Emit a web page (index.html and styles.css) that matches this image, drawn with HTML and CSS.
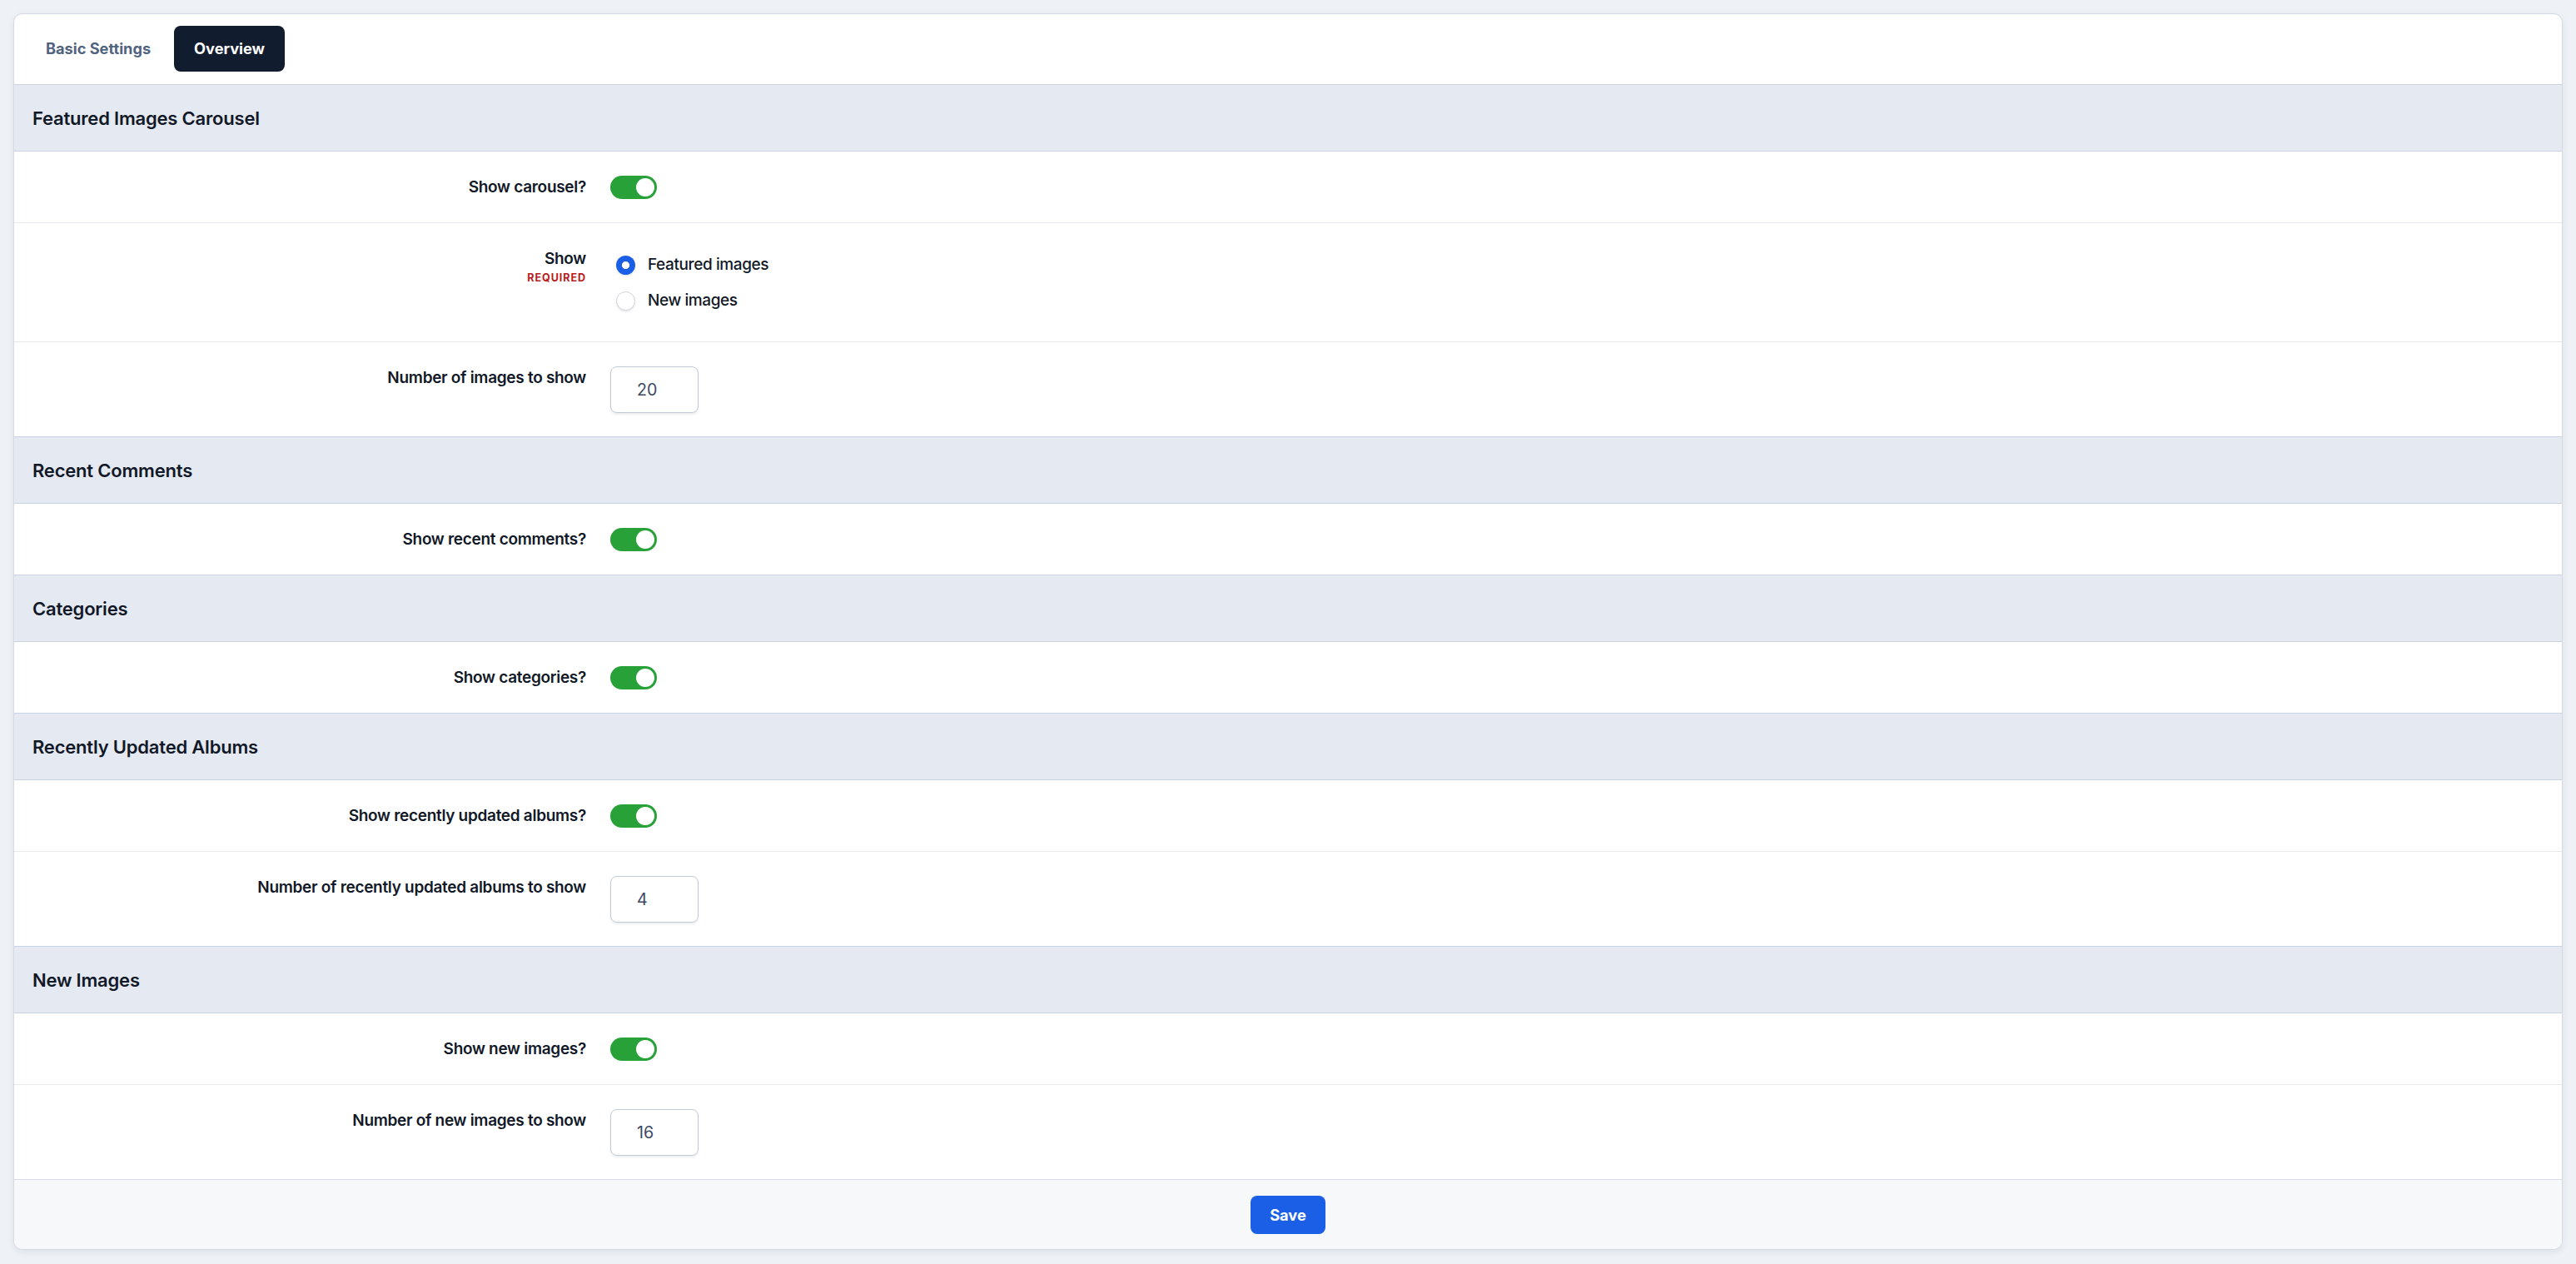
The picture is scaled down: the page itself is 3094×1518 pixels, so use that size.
FILE: index.html
```html
<!DOCTYPE html>
<html lang="en">
<head>
<meta charset="utf-8">
<title>Overview settings</title>
<link rel="stylesheet" href="styles.css">
</head>
<body>
<div class="card">
  <nav class="tabs">
    <button class="tab">Basic Settings</button>
    <button class="tab tab-active">Overview</button>
  </nav>

  <section class="group">
    <h2 class="group-head">Featured Images Carousel</h2>
    <div class="row">
      <div class="row-label"><span class="label-text">Show carousel?</span></div>
      <div class="row-control"><span class="toggle"><span class="knob"></span></span></div>
    </div>
    <div class="row">
      <div class="row-label"><span class="label-text">Show</span><span class="required">REQUIRED</span></div>
      <div class="row-control">
        <div class="radios">
          <div class="radio-opt"><span class="radio radio-on"></span><span class="radio-text">Featured images</span></div>
          <div class="radio-opt"><span class="radio"></span><span class="radio-text">New images</span></div>
        </div>
      </div>
    </div>
    <div class="row">
      <div class="row-label"><span class="label-text">Number of images to show</span></div>
      <div class="row-control"><span class="num-input">20</span></div>
    </div>
  </section>

  <section class="group">
    <h2 class="group-head">Recent Comments</h2>
    <div class="row">
      <div class="row-label"><span class="label-text">Show recent comments?</span></div>
      <div class="row-control"><span class="toggle"><span class="knob"></span></span></div>
    </div>
  </section>

  <section class="group">
    <h2 class="group-head">Categories</h2>
    <div class="row">
      <div class="row-label"><span class="label-text">Show categories?</span></div>
      <div class="row-control"><span class="toggle"><span class="knob"></span></span></div>
    </div>
  </section>

  <section class="group">
    <h2 class="group-head">Recently Updated Albums</h2>
    <div class="row">
      <div class="row-label"><span class="label-text">Show recently updated albums?</span></div>
      <div class="row-control"><span class="toggle"><span class="knob"></span></span></div>
    </div>
    <div class="row">
      <div class="row-label"><span class="label-text">Number of recently updated albums to show</span></div>
      <div class="row-control"><span class="num-input">4</span></div>
    </div>
  </section>

  <section class="group">
    <h2 class="group-head">New Images</h2>
    <div class="row">
      <div class="row-label"><span class="label-text">Show new images?</span></div>
      <div class="row-control"><span class="toggle"><span class="knob"></span></span></div>
    </div>
    <div class="row">
      <div class="row-label"><span class="label-text">Number of new images to show</span></div>
      <div class="row-control"><span class="num-input">16</span></div>
    </div>
  </section>

  <footer class="footer">
    <button class="save">Save</button>
  </footer>
</div>
</body>
</html>
```

FILE: styles.css
```css
* { box-sizing: border-box; }

html, body { height: 100%; }

body {
  margin: 0;
  padding: 16px;
  background: #eef1f6;
  font-family: Inter, "Liberation Sans", sans-serif;
  color: #111827;
}

.card {
  background: #ffffff;
  border: 1px solid #d4d9e3;
  border-radius: 11px;
  overflow: hidden;
  box-shadow: 0 3px 8px rgba(30, 41, 59, 0.07);
}

.tabs {
  display: flex;
  gap: 4px;
  padding: 14px 14px 15px;
  border-bottom: 1px solid #cdd5e1;
}

.tab {
  font-family: inherit;
  font-size: 18.2px;
  font-weight: 700;
  line-height: 55px;
  height: 55px;
  padding: 0 24px;
  border: 0;
  border-radius: 8px;
  background: transparent;
  color: #52637f;
  cursor: pointer;
}

.tab-active {
  background: #121c2f;
  color: #ffffff;
}

.group + .group .group-head {
  border-top: 1px solid #c9d2df;
}

.group-head {
  margin: 0;
  height: 80px;
  padding: 0 22px;
  display: flex;
  align-items: center;
  background: #e5e9f1;
  border-bottom: 1px solid #c9d2df;
  font-size: 22px;
  font-weight: 600;
  letter-spacing: -0.2px;
  color: #111827;
}

.group + .group .group-head { height: 81px; }

.row {
  display: grid;
  grid-template-columns: 687px 1fr;
  column-gap: 29px;
  padding: 29px 0 28px;
  align-items: start;
}

.row + .row { border-top: 1px solid #e7e9ee; }

.row-label {
  display: flex;
  flex-direction: column;
  align-items: flex-end;
  text-align: right;
}

.label-text {
  font-size: 19px;
  font-weight: 600;
  line-height: 28px;
  letter-spacing: -0.3px;
  color: #111827;
}

.required {
  font-size: 12.6px;
  font-weight: 700;
  line-height: 18px;
  letter-spacing: 0.9px;
  color: #b91c1c;
}

.row-control {
  display: flex;
  align-items: flex-start;
}

.toggle {
  width: 56px;
  height: 28px;
  border-radius: 14px;
  background: #28a139;
  padding: 3px;
  display: flex;
  justify-content: flex-end;
}

.knob {
  width: 22px;
  height: 22px;
  border-radius: 50%;
  background: #ffffff;
}

.radios {
  display: flex;
  flex-direction: column;
  gap: 15px;
  padding: 7px 0 7px 7px;
}

.radio-opt {
  display: flex;
  align-items: center;
  gap: 15px;
  height: 28px;
}

.radio {
  width: 23px;
  height: 23px;
  border-radius: 50%;
  border: 1px solid #cfd4dc;
  background: #ffffff;
  box-shadow: 0 1.5px 2.5px rgba(15, 23, 42, 0.1);
}

.radio-on {
  border: 0;
  background: radial-gradient(circle, #ffffff 0 4.2px, #1a5fe6 4.9px);
}

.radio-text {
  font-size: 19px;
  font-weight: 500;
  line-height: 28px;
  letter-spacing: -0.4px;
  color: #111827;
}

.num-input {
  display: flex;
  align-items: center;
  width: 106px;
  height: 56px;
  padding-left: 31px;
  border: 1px solid #c3cad6;
  border-radius: 8px;
  background: #ffffff;
  box-shadow: 0 1.5px 3px rgba(15, 23, 42, 0.08);
  font-size: 19.6px;
  color: #3b4863;
}

.footer {
  display: flex;
  justify-content: center;
  padding: 19px 0 18px;
  background: #f7f8fa;
  border-top: 1px solid #d9dce6;
}

.save {
  font-family: inherit;
  width: 90px;
  height: 46px;
  border: 0;
  border-radius: 8px;
  background: #1a5fe6;
  color: #ffffff;
  font-size: 18.2px;
  font-weight: 700;
  cursor: pointer;
}
```
